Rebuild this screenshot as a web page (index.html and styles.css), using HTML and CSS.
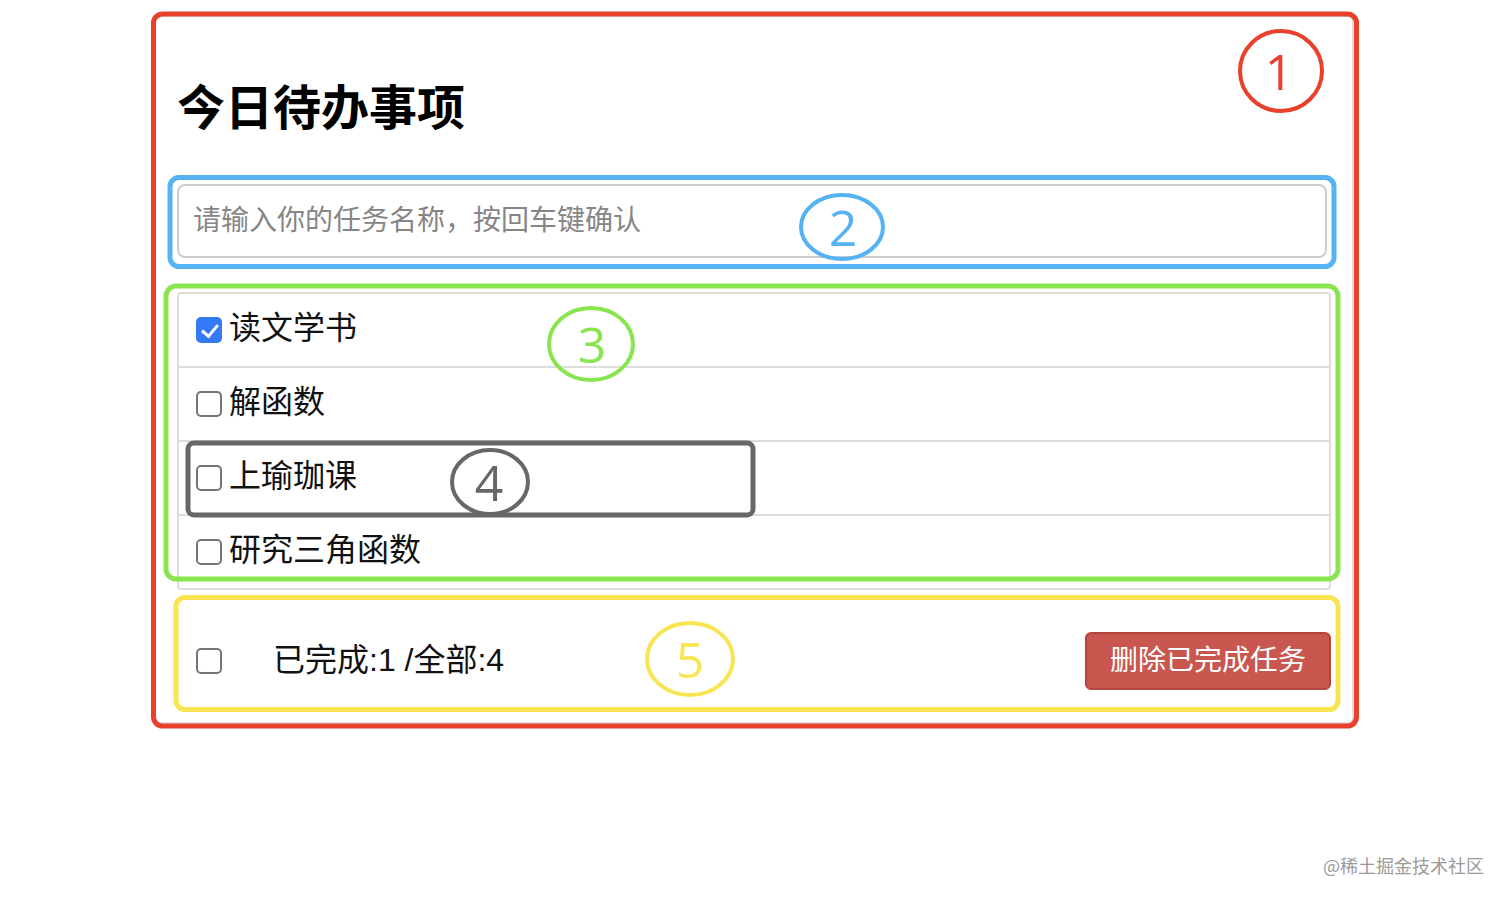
FILE: index.html
```html
<!DOCTYPE html>
<html lang="zh-CN">
<head>
<meta charset="utf-8">
<title>今日待办事项</title>
<link rel="stylesheet" href="styles.css">
</head>
<body>
<div class="page">
  <div class="card">
    <h1 class="title">今日待办事项</h1>
    <input class="task-input" type="text" placeholder="请输入你的任务名称，按回车键确认">
    <ul class="todo-list">
      <li class="todo-item"><span class="check checked"></span><span class="todo-text">读文学书</span></li>
      <li class="todo-item"><span class="check"></span><span class="todo-text">解函数</span></li>
      <li class="todo-item"><span class="check"></span><span class="todo-text">上瑜珈课</span></li>
      <li class="todo-item"><span class="check"></span><span class="todo-text">研究三角函数</span></li>
    </ul>
    <div class="footer">
      <div class="footer-left">
        <span class="check"></span>
        <span class="count">已完成:1 /全部:4</span>
      </div>
      <button class="btn-danger" type="button">删除已完成任务</button>
    </div>
  </div>
</div>

<svg class="annotations" width="1508" height="900" viewBox="0 0 1508 900">
  <rect x="153.5" y="14" width="1203" height="712" rx="9" fill="none" stroke="#e8402a" stroke-width="5"/>
  <ellipse cx="1281" cy="71" rx="41" ry="40" fill="none" stroke="#e8402a" stroke-width="4"/>
  <text x="1279" y="71" class="anno-num" fill="#e8402a">1</text>

  <rect x="170" y="177.5" width="1164" height="89" rx="9" fill="none" stroke="#55b3f4" stroke-width="5"/>
  <ellipse cx="842" cy="227" rx="41" ry="32" fill="none" stroke="#55b3f4" stroke-width="4"/>
  <text x="843" y="227" class="anno-num" fill="#55b3f4">2</text>

  <rect x="166" y="286" width="1172" height="293" rx="10" fill="none" stroke="#8ae44f" stroke-width="5"/>
  <ellipse cx="591" cy="344" rx="42" ry="36" fill="none" stroke="#8ae44f" stroke-width="4"/>
  <text x="592" y="344" class="anno-num" fill="#8ae44f">3</text>

  <rect x="188" y="443" width="565" height="72" rx="6" fill="none" stroke="#676767" stroke-width="5"/>
  <ellipse cx="490" cy="482" rx="38" ry="32" fill="none" stroke="#676767" stroke-width="4"/>
  <text x="489" y="482" class="anno-num" fill="#676767">4</text>

  <rect x="176" y="597.5" width="1162" height="112" rx="9" fill="none" stroke="#f9e552" stroke-width="5"/>
  <ellipse cx="690" cy="659" rx="43" ry="36" fill="none" stroke="#f9e552" stroke-width="4"/>
  <text x="690" y="659" class="anno-num" fill="#f9e552">5</text>
</svg>

<div class="watermark">@稀土掘金技术社区</div>
</body>
</html>
```

FILE: styles.css
```css
* {
  box-sizing: border-box;
}

html, body {
  margin: 0;
  padding: 0;
  background: #ffffff;
}

body {
  position: relative;
  width: 1508px;
  height: 900px;
  overflow: hidden;
  font-family: "Liberation Sans", "Noto Sans CJK SC", sans-serif;
  color: #111;
}

.page {
  width: 1200px;
  margin: 15px auto 0;
}

.card {
  border: 2px solid #dedede;
  border-radius: 6px;
  padding: 0 21px 32px 21px;
}

.title {
  margin: 0;
  padding-top: 68px;
  font-size: 48px;
  line-height: 48px;
  font-weight: 700;
  color: #000;
}

.task-input {
  display: block;
  margin-top: 51px;
  width: 1150px;
  height: 74px;
  border: 2px solid #cccccc;
  border-radius: 8px;
  padding: 0 14px;
  font-family: "Liberation Sans", "Noto Sans CJK SC", sans-serif;
  font-size: 28px;
  color: #333;
  outline: none;
}

.task-input::placeholder {
  color: #868686;
}

.todo-list {
  list-style: none;
  margin: 34px 0 0;
  padding: 0;
  border: 2px solid #dddddd;
  border-radius: 4px;
}

.todo-item {
  display: flex;
  align-items: center;
  gap: 7px;
  height: 74px;
  padding-left: 17px;
  border-top: 2px solid #dddddd;
}

.todo-item:first-child {
  border-top: none;
  height: 72px;
}

.todo-text {
  font-size: 32px;
  line-height: 1;
  color: #111;
  position: relative;
  top: -2px;
}

.check {
  position: relative;
  display: inline-block;
  width: 26px;
  height: 26px;
  flex: none;
  border: 2px solid #767676;
  border-radius: 5px;
  background: #fff;
}

.check.checked {
  background: #3479f6;
  border-color: #3479f6;
}

.check.checked::after {
  content: "";
  position: absolute;
  left: 7px;
  top: 2px;
  width: 7px;
  height: 13px;
  border-right: 3px solid #fff;
  border-bottom: 3px solid #fff;
  transform: rotate(40deg);
}

.footer {
  display: flex;
  align-items: center;
  justify-content: space-between;
  margin-top: 42px;
  padding-left: 19px;
}

.footer-left {
  display: flex;
  align-items: center;
}

.count {
  margin-left: 51px;
  font-size: 32px;
  line-height: 1;
  color: #111;
  position: relative;
  top: -1px;
}

.btn-danger {
  height: 58px;
  padding: 0 23px;
  border: 2px solid #b4463f;
  border-radius: 6px;
  background: #c9574f;
  color: #ffffff;
  font-family: "Liberation Sans", "Noto Sans CJK SC", sans-serif;
  font-size: 28px;
  line-height: 1;
}

.annotations {
  position: absolute;
  left: 0;
  top: 0;
  pointer-events: none;
}

.anno-num {
  font-family: "Open Sans", "DejaVu Sans", sans-serif;
  font-weight: 400;
  font-size: 50px;
  text-anchor: middle;
  dominant-baseline: central;
}

.watermark {
  position: absolute;
  left: 1323px;
  top: 853px;
  font-family: "Noto Sans CJK SC", sans-serif;
  font-size: 18px;
  line-height: 24px;
  color: #9a9a9a;
}
```
